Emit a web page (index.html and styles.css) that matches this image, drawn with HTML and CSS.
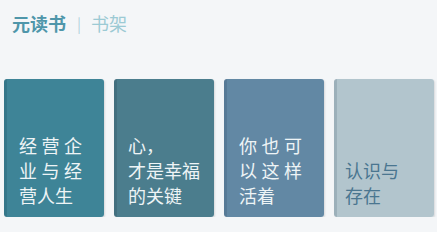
FILE: index.html
```html
<!DOCTYPE html>
<html>
<head>
	<title>书架</title>
	<link rel="stylesheet" href="styles.css">
</head>
<body>
	<header class="top">
		<span class="brand">元读书</span>
		<span class="sep">|</span>
		<span class="section">书架</span>
	</header>
	<div class="shelf">
		<div class="book book-teal">
			<div class="title">
				<span class="line spread">经营企</span>
				<span class="line spread">业与经</span>
				<span class="line">营人生</span>
			</div>
		</div>
		<div class="book book-sea">
			<div class="title">
				<span class="line">心，</span>
				<span class="line">才是幸福</span>
				<span class="line">的关键</span>
			</div>
		</div>
		<div class="book book-slate">
			<div class="title">
				<span class="line spread">你也可</span>
				<span class="line spread">以这样</span>
				<span class="line">活着</span>
			</div>
		</div>
		<div class="book book-mist">
			<div class="title">
				<span class="line">认识与</span>
				<span class="line">存在</span>
			</div>
		</div>
	</div>
</body>
</html>
```

FILE: styles.css
```css
body {
	background-color: #f4f6f8;
	font-family: "Noto Sans CJK SC", "Noto Sans", sans-serif;
	margin: 0;
	padding: 0;
	overflow: hidden;
}

.top {
	display: flex;
	align-items: center;
	height: 28px;
	padding: 9px 0 0 12px;
}

.brand {
	font-size: 18px;
	font-weight: bold;
	color: #4f96aa;
}

.sep {
	font-size: 15px;
	color: #b5d4dc;
	margin: 0 10px 0 11px;
}

.section {
	font-size: 18px;
	color: #9ccad4;
}

.shelf {
	display: flex;
	gap: 10px;
	padding: 42px 0 0 4px;
}

.book {
	flex: none;
	width: 100px;
	height: 138px;
	border-radius: 3px;
	box-sizing: border-box;
	display: flex;
	flex-direction: column;
	justify-content: flex-end;
	padding: 0 0 9px 15px;
	color: #eef4f6;
	box-shadow: 1px 1px 2px rgba(0, 0, 0, 0.12);
}

.book-teal {
	background: linear-gradient(to right, #347689 0, #347689 3px, #3e8497 3px);
}

.book-sea {
	background: linear-gradient(to right, #426f7f 0, #426f7f 3px, #4b7d8d 3px);
	padding-left: 14px;
}

.book-slate {
	background: linear-gradient(to right, #577a96 0, #577a96 3px, #6288a4 3px);
}

.book-mist {
	background: linear-gradient(to right, #9cb0ba 0, #9cb0ba 3px, #b2c5cd 3px);
	color: #4a7690;
	padding-left: 11px;
}

.title {
	font-size: 18px;
	line-height: 25px;
}

.line {
	display: block;
	white-space: nowrap;
}

.spread {
	width: 63px;
	text-align: justify;
	text-align-last: justify;
}
```
